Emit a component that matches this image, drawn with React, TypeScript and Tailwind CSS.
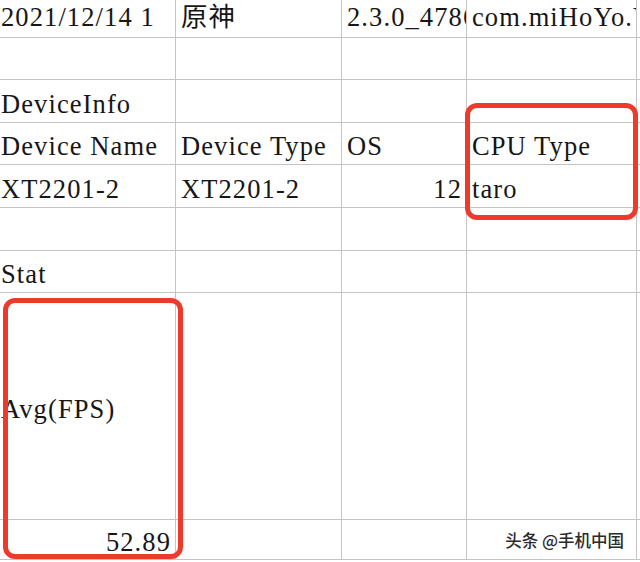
const rows: string[][] = [
  ["2021/12/14 1", "原神", "2.3.0_4786", "com.miHoYo.Yuanshen"],
  ["", "", "", ""],
  ["DeviceInfo", "", "", ""],
  ["Device Name", "Device Type", "OS", "CPU Type"],
  ["XT2201-2", "XT2201-2", "12", "taro"],
  ["", "", "", ""],
  ["Stat", "", "", ""],
  ["Avg(FPS)", "", "", ""],
  ["52.89", "", "", ""],
];

// numbers sit at the right edge of their cell
const rightAligned = ["12", "52.89"];

const App = () => {
  return (
    <div className="relative w-[640px] h-[562px] overflow-hidden bg-white text-[#161616]">
      <div
        className="grid grid-cols-[176px_166px_125px_170px_1fr] grid-rows-[38px_42px_43px_42px_43px_43px_42px_227px_40px] text-[26.5px] tracking-[1.1px]"
        style={{ fontFamily: '"Liberation Serif", "Noto Sans CJK SC", serif' }}
      >
        {rows.map((row, r) =>
          [...row, ""].map((cell, c) => (
            <div
              key={`${r}-${c}`}
              className={`flex items-center overflow-hidden whitespace-nowrap border-b border-r border-[#c4c4c4] ${
                r === 0 ? "pb-[2px]" : "pt-[7px]"
              } ${c === 0 ? "pl-[1px]" : "pl-[5px]"} ${
                rightAligned.includes(cell) ? "justify-end pr-[4px]" : ""
              }`}
            >
              {cell}
            </div>
          ))
        )}
      </div>

      {/* HIGHLIGHTS */}
      <div className="absolute left-[465px] top-[103px] w-[173px] h-[117px] rounded-[12px] border-[5px] border-[#ec3a2b]" />
      <div className="absolute left-[3px] top-[298px] w-[180px] h-[261px] rounded-[12px] border-[5px] border-[#ec3a2b]" />

      {/* WATERMARK */}
      <div
        className="absolute right-[16px] bottom-[9px] text-[16.5px] font-medium text-[#2a2a2a] [text-shadow:0_0_2px_#fff,0_0_2px_#fff]"
        style={{ fontFamily: '"Noto Sans CJK SC", sans-serif' }}
      >
        头条 @手机中国
      </div>
    </div>
  );
};

export default App;
